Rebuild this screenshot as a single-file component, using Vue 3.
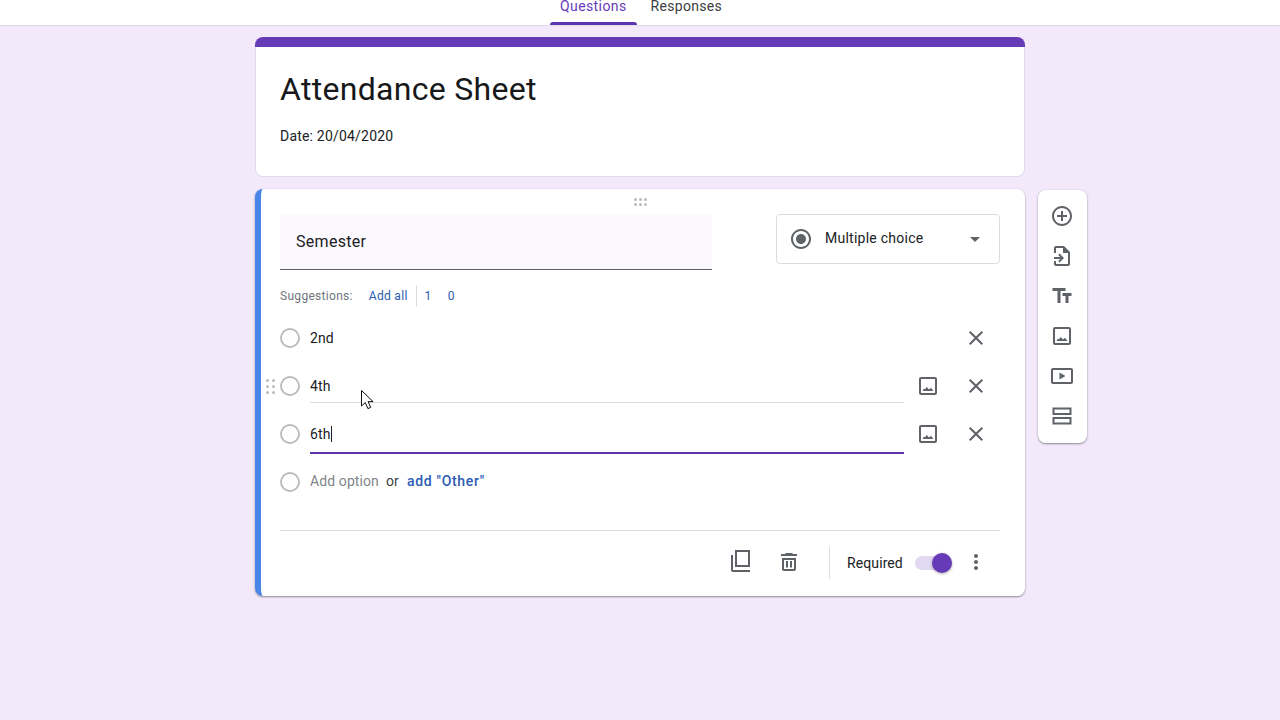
<script setup>
const IMAGE_FRAME = "M19 5v14H5V5h14m0-2H5c-1.1 0-2 .9-2 2v14c0 1.1.9 2 2 2h14c1.1 0 2-.9 2-2V5c0-1.1-.9-2-2-2zM6.5 17h11l-2.6-3.2-1.9 1.7-2.2-2.5-1.8 2.2-1-.8z";

const options = [
  { label: "2nd", state: "plain" },
  { label: "4th", state: "hover" },
  { label: "6th", state: "focus" },
];

const tools = [
  { name: "Add question", d: "M13 7h-2v4H7v2h4v4h2v-4h4v-2h-4V7zm-1-5C6.48 2 2 6.48 2 12s4.48 10 10 10 10-4.48 10-10S17.52 2 12 2zm0 18c-4.41 0-8-3.59-8-8s3.59-8 8-8 8 3.59 8 8-3.59 8-8 8z" },
  { name: "Import questions", d: "M6 2h8l6 6v12c0 1.1-.9 2-2 2H6c-1.1 0-2-.9-2-2v-3h2v3h12V9h-5V4H6v5H4V4c0-1.1.9-2 2-2zM4 13h6.2l-2-2 1.4-1.4 4.4 4.4-4.4 4.4-1.4-1.4 2-2H4v-2z" },
  { name: "Add title", d: "M2.5 4v3h5v12h3V7h5V4h-13zm19 5h-9v3h3v7h3v-7h3V9z" },
  { name: "Add image", d: IMAGE_FRAME },
  { name: "Add video", d: "M21 6v12H3V6h18m0-2H3c-1.1 0-2 .9-2 2v12c0 1.1.9 2 2 2h18c1.1 0 2-.9 2-2V6c0-1.1-.9-2-2-2zM9.5 8.5v7l6-3.5z" },
  { name: "Add section", d: "M2.5 3.5h19v7.5h-19V3.5zm2 2V9h15V5.5h-15zM2.5 13h19v7.5h-19V13zm2 2v3.5h15V15h-15z" },
];
</script>

<template>
  <div class="page">
    <header class="topbar">
      <nav class="tabs">
        <span class="tab is-active">Questions</span>
        <span class="tab">Responses</span>
      </nav>
    </header>

    <main class="editor">
      <section class="title-card">
        <div class="title-card__bar"></div>
        <div class="title-card__body">
          <h1 class="form-title">Attendance Sheet</h1>
          <p class="form-date">Date: 20/04/2020</p>
        </div>
      </section>

      <section class="question">
        <div class="drag-top" aria-hidden="true">
          <i v-for="n in 6" :key="n"></i>
        </div>

        <div class="question__head">
          <div class="question__input">Semester</div>
          <div class="type-select">
            <svg class="type-select__icon" viewBox="0 0 24 24" width="24" height="24">
              <path d="M12 7c-2.76 0-5 2.24-5 5s2.24 5 5 5 5-2.24 5-5-2.24-5-5-5zm0-5C6.48 2 2 6.48 2 12s4.48 10 10 10 10-4.48 10-10S17.52 2 12 2zm0 18c-4.42 0-8-3.58-8-8s3.58-8 8-8 8 3.58 8 8-3.58 8-8 8z" />
            </svg>
            <span class="type-select__label">Multiple choice</span>
            <span class="type-select__caret"></span>
          </div>
        </div>

        <div class="suggestions">
          <span class="suggestions__label">Suggestions:</span>
          <a class="suggestions__all">Add all</a>
          <span class="suggestions__sep"></span>
          <a class="suggestions__item">1</a>
          <a class="suggestions__item">0</a>
        </div>

        <div class="options">
          <div v-for="opt in options" :key="opt.label" class="option">
            <div v-if="opt.state === 'hover'" class="drag-side" aria-hidden="true">
              <i v-for="n in 6" :key="n"></i>
            </div>
            <span class="radio"></span>
            <div class="option__field" :class="`is-${opt.state}`">
              {{ opt.label }}<span v-if="opt.state === 'focus'" class="caret"></span>
            </div>
            <button v-if="opt.state !== 'plain'" class="icon-btn" type="button" aria-label="Add image">
              <svg viewBox="0 0 24 24" width="24" height="24"><path :d="IMAGE_FRAME" /></svg>
            </button>
            <span v-else></span>
            <button class="icon-btn" type="button" aria-label="Remove">
              <svg viewBox="0 0 24 24" width="24" height="24">
                <path d="M19 6.41 17.59 5 12 10.59 6.41 5 5 6.41 10.59 12 5 17.59 6.41 19 12 13.41 17.59 19 19 17.59 13.41 12z" />
              </svg>
            </button>
          </div>

          <div class="option option--add">
            <span class="radio"></span>
            <div class="add-line">
              <span class="add-line__hint">Add option</span>
              <span class="add-line__or">or</span>
              <a class="add-line__other">add "Other"</a>
            </div>
          </div>
        </div>

        <footer class="question__foot">
          <button class="icon-btn" type="button" aria-label="Duplicate">
            <svg viewBox="0 0 24 24" width="24" height="24">
              <path d="M6 0h15v17H6V0zm2 2v13h11V2H8zM2 5h2v15h17v2H4c-1.1 0-2-.9-2-2V5z" />
            </svg>
          </button>
          <button class="icon-btn" type="button" aria-label="Delete">
            <svg viewBox="0 0 24 24" width="24" height="24">
              <path d="M9 3h6l1 1h4v2H4V4h4l1-1zM5 8h14v11c0 1.1-.9 2-2 2H7c-1.1 0-2-.9-2-2V8zm2 2v9h10v-9H7zm2 1h2v6.5H9V11zm4 0h2v6.5h-2V11z" />
            </svg>
          </button>
          <span class="question__divider"></span>
          <span class="required">Required</span>
          <span class="switch"><span class="switch__knob"></span></span>
          <button class="icon-btn" type="button" aria-label="More">
            <svg viewBox="0 0 24 24" width="24" height="24">
              <path d="M12 8c1.1 0 2-.9 2-2s-.9-2-2-2-2 .9-2 2 .9 2 2 2zm0 2c-1.1 0-2 .9-2 2s.9 2 2 2 2-.9 2-2-.9-2-2-2zm0 6c-1.1 0-2 .9-2 2s.9 2 2 2 2-.9 2-2-.9-2-2-2z" />
            </svg>
          </button>
        </footer>

        <!-- mouse pointer caught in the capture -->
        <svg class="pointer" viewBox="0 0 13 20" width="13" height="20" aria-hidden="true">
          <path d="M.5.5V16l3.8-3.4 2.6 6 2.8-1.2-2.6-5.8h5z" fill="#fff" stroke="#111" stroke-width="1" />
        </svg>
      </section>

      <aside class="toolbar">
        <button v-for="tool in tools" :key="tool.name" class="toolbar__btn" type="button" :aria-label="tool.name">
          <svg viewBox="0 0 24 24" width="24" height="24"><path :d="tool.d" /></svg>
        </button>
      </aside>
    </main>
  </div>
</template>

<style>
html, body {
  margin: 0;
  overflow: hidden;
}
</style>

<style scoped>
.page {
  height: 720px;
  background: #f4e8fb;
  font-family: Roboto, "Liberation Sans", sans-serif;
  font-size: 14px;
  color: #202124;
  overflow: hidden;
}

.topbar {
  height: 25px;
  background: #fff;
  border-bottom: 1px solid #dfd9e6;
}
.tabs {
  display: flex;
  justify-content: center;
  gap: 4px;
  padding-left: 2px;
}
.tab {
  position: relative;
  height: 25px;
  padding: 0 10px;
  line-height: 13px;
  letter-spacing: 0.3px;
  color: #3c4043;
}
.tab.is-active {
  letter-spacing: 0.4px;
  color: #673ab7;
}
.tab.is-active::after {
  content: "";
  position: absolute;
  left: 0;
  right: 0;
  bottom: 0;
  height: 3px;
  background: #5e35b1;
  border-radius: 3px 3px 0 0;
}

.editor {
  display: grid;
  grid-template-columns: 1fr 770px 1fr;
  row-gap: 12px;
  padding-top: 11px;
}

.title-card {
  grid-column: 2;
}
.title-card__bar {
  height: 10px;
  background: #673ab7;
  border-radius: 8px 8px 0 0;
}
.title-card__body {
  height: 130px;
  box-sizing: border-box;
  padding: 22px 24px 0;
  background: #fff;
  border: 1px solid #e1dbe8;
  border-top: 0;
  border-radius: 0 0 8px 8px;
}
.form-title {
  margin: 0;
  font-size: 32px;
  font-weight: 400;
  line-height: 40px;
  letter-spacing: 0.3px;
  color: #17181a;
}
.form-date {
  margin: 17px 0 0;
  line-height: 20px;
  letter-spacing: 0.2px;
  color: #202124;
}

.question {
  grid-column: 2;
  position: relative;
  box-sizing: border-box;
  height: 407px;
  padding: 25px 25px 0 19px;
  background: #fff;
  border-left: 6px solid #4a85e8;
  border-radius: 8px;
  box-shadow: 0 0 1px #cfc8d8, 0 1px 2px rgba(60, 64, 67, 0.6);
}

.drag-top,
.drag-side {
  position: absolute;
  display: grid;
}
.drag-top {
  left: 373px;
  top: 9px;
  grid-template-columns: repeat(3, 3px);
  gap: 2px;
}
.drag-side {
  left: -14px;
  top: 17px;
  grid-template-columns: repeat(2, 3px);
  gap: 3px;
}
.drag-top i,
.drag-side i {
  width: 3px;
  height: 3px;
  border-radius: 50%;
  background: #b9bbbe;
}

.question__head {
  display: flex;
  justify-content: space-between;
  align-items: flex-start;
}
.question__input {
  box-sizing: border-box;
  width: 432px;
  height: 56px;
  padding: 17px 16px 0;
  background: #fbf8fe;
  border-bottom: 1px solid #5f6368;
  border-radius: 4px 4px 0 0;
  font-size: 16px;
  line-height: 22px;
  letter-spacing: 0.3px;
  color: #202124;
}
.type-select {
  box-sizing: border-box;
  display: flex;
  align-items: center;
  width: 224px;
  height: 50px;
  padding: 0 19px 0 12px;
  border: 1px solid #dadce0;
  border-radius: 4px;
}
.type-select__icon {
  fill: #5f6368;
}
.type-select__label {
  flex: 1;
  margin-left: 12px;
  margin-top: -2px;
  letter-spacing: 0.25px;
}
.type-select__caret {
  width: 0;
  height: 0;
  border-left: 5px solid transparent;
  border-right: 5px solid transparent;
  border-top: 5px solid #5f6368;
}

.suggestions {
  display: flex;
  align-items: center;
  height: 24px;
  margin: 14px 0 6px;
  font-size: 12px;
  letter-spacing: 0.3px;
  color: #70757a;
}
.suggestions__all {
  margin-left: 16px;
  color: #2b5bb5;
}
.suggestions__sep {
  width: 1px;
  height: 22px;
  margin: 0 8px;
  background: #dadce0;
}
.suggestions__item {
  margin-right: 16px;
  color: #2b5bb5;
}

.option {
  position: relative;
  display: grid;
  grid-template-columns: 20px 604px 48px 48px;
  align-items: start;
  height: 48px;
}
.radio {
  box-sizing: border-box;
  width: 20px;
  height: 20px;
  margin-top: 14px;
  border: 2px solid #bdbdbd;
  border-radius: 50%;
}
.option__field {
  box-sizing: border-box;
  width: 594px;
  height: 41px;
  margin-left: 10px;
  padding-top: 14px;
  line-height: 20px;
  letter-spacing: 0.1px;
}
.option__field.is-hover {
  border-bottom: 1px solid #dadce0;
}
.option__field.is-focus {
  height: 44px;
  border-bottom: 2px solid #5e35b1;
}
.caret {
  display: inline-block;
  width: 1px;
  height: 16px;
  margin-left: 1px;
  vertical-align: -3px;
  background: #202124;
}

.icon-btn {
  display: flex;
  align-items: center;
  justify-content: center;
  width: 48px;
  height: 48px;
  padding: 0;
  border: 0;
  background: none;
}
.icon-btn svg {
  fill: #5f6368;
}

.add-line {
  display: flex;
  align-items: center;
  height: 46px;
  margin-left: 10px;
  letter-spacing: 0.1px;
  white-space: nowrap;
}
.add-line__hint {
  color: #80868b;
}
.add-line__or {
  margin-left: 7px;
  color: #3c4043;
}
.add-line__other {
  margin-left: 8px;
  font-weight: 500;
  letter-spacing: 0.7px;
  color: #2b5bb5;
}

.question__foot {
  display: flex;
  align-items: center;
  justify-content: flex-end;
  height: 64px;
  margin-top: 24px;
  border-top: 1px solid #dadce0;
}
.question__foot .icon-btn {
  margin-top: -2px;
}
.question__divider {
  width: 1px;
  height: 32px;
  margin-left: 16px;
  background: #dadce0;
}
.required {
  width: 56px;
  margin-left: 17px;
  letter-spacing: 0.1px;
  color: #202124;
}
.switch {
  position: relative;
  width: 37px;
  height: 14px;
  margin-left: 12px;
  background: #e1d8f1;
  border-radius: 7px;
}
.switch__knob {
  position: absolute;
  right: 0;
  top: -3px;
  width: 20px;
  height: 20px;
  background: #673ab7;
  border-radius: 50%;
  box-shadow: 0 1px 3px rgba(0, 0, 0, 0.3);
}

.pointer {
  position: absolute;
  left: 100px;
  top: 201px;
}

.toolbar {
  grid-column: 3;
  box-sizing: border-box;
  width: 49px;
  height: 253px;
  margin: 1px 0 0 13px;
  padding-top: 6px;
  background: #fff;
  border-radius: 8px;
  box-shadow: 0 0 1px #cfc8d8, 0 1px 2px rgba(60, 64, 67, 0.6);
}
.toolbar__btn {
  display: flex;
  align-items: center;
  justify-content: center;
  width: 48px;
  height: 40px;
  padding: 0;
  border: 0;
  background: none;
}
.toolbar__btn svg {
  fill: #5f6368;
}
</style>
